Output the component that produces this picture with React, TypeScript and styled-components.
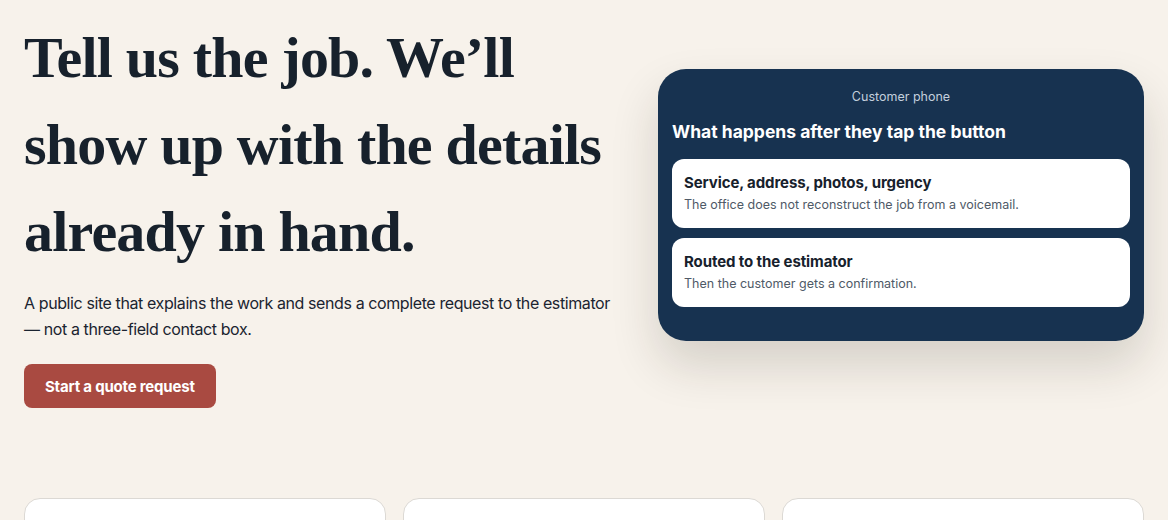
import React from 'react';
import styled, { createGlobalStyle } from 'styled-components';

const GlobalStyle = createGlobalStyle`
  * { box-sizing: border-box; }
  body {
    margin: 0;
    background: #f7f2eb;
    color: #1b2430;
    font-family: Inter, "Noto Sans", sans-serif;
  }
`;

const Page = styled.main`
  padding: 0 24px;
  height: 520px;
  overflow: hidden;
`;

const Hero = styled.section`
  display: grid;
  grid-template-columns: 1fr 486px;
  column-gap: 38px;
  align-items: start;
  padding-top: 14px;
`;

const Intro = styled.div`
  display: flex;
  flex-direction: column;
  align-items: flex-start;
`;

const Headline = styled.h1`
  margin: 0;
  font-family: "Liberation Serif", "DejaVu Serif", serif;
  font-weight: 700;
  font-size: 58px;
  line-height: 87px;
  letter-spacing: -0.8px;
  color: #17212c;
`;

const Lead = styled.p`
  margin: 15px 0 0;
  font-size: 16px;
  line-height: 26px;
  letter-spacing: -0.4px;
  color: #1b2430;
`;

const PrimaryButton = styled.button`
  margin-top: 22px;
  height: 44px;
  padding: 0 21px;
  border: 0;
  border-radius: 8px;
  background: #a94a41;
  color: #fff;
  font-family: inherit;
  font-size: 15px;
  font-weight: 700;
  letter-spacing: -0.2px;
  cursor: pointer;
`;

const Phone = styled.aside`
  margin-top: 55px;
  padding: 20px 14px 34px;
  border-radius: 28px;
  background: #173250;
  box-shadow: 0 24px 48px rgba(40, 30, 20, 0.16);
  display: flex;
  flex-direction: column;
`;

const PhoneLabel = styled.div`
  text-align: center;
  font-size: 12.5px;
  line-height: 16px;
  color: #c3cfdd;
`;

const PhoneTitle = styled.h2`
  margin: 16px 0 16px;
  font-size: 17.5px;
  line-height: 22px;
  font-weight: 700;
  color: #fff;
`;

const StepList = styled.div`
  display: flex;
  flex-direction: column;
  gap: 10px;
`;

const Step = styled.div`
  background: #fff;
  border-radius: 12px;
  padding: 14px 12px;
  height: 69px;
`;

const StepTitle = styled.div`
  font-size: 15px;
  line-height: 20px;
  font-weight: 700;
  letter-spacing: -0.1px;
  color: #17212c;
`;

const StepText = styled.div`
  margin-top: 3px;
  font-size: 12.5px;
  line-height: 18px;
  color: #4f5a67;
`;

const Cards = styled.section`
  margin-top: 90px;
  display: grid;
  grid-template-columns: repeat(3, 1fr);
  gap: 17px;
`;

const Card = styled.div`
  height: 120px;
  background: #fff;
  border: 1px solid #dcd9d4;
  border-radius: 16px;
`;

const steps = [
  {
    title: 'Service, address, photos, urgency',
    text: 'The office does not reconstruct the job from a voicemail.',
  },
  {
    title: 'Routed to the estimator',
    text: 'Then the customer gets a confirmation.',
  },
];

export default function App() {
  return (
    <>
      <GlobalStyle />
      <Page>
        <Hero>
          <Intro>
            <Headline>
              Tell us the job. We’ll
              <br />
              show up with the details
              <br />
              already in hand.
            </Headline>
            <Lead>
              A public site that explains the work and sends a complete request to the estimator
              — not a three-field contact box.
            </Lead>
            <PrimaryButton>Start a quote request</PrimaryButton>
          </Intro>
          <Phone>
            <PhoneLabel>Customer phone</PhoneLabel>
            <PhoneTitle>What happens after they tap the button</PhoneTitle>
            <StepList>
              {steps.map((s) => (
                <Step key={s.title}>
                  <StepTitle>{s.title}</StepTitle>
                  <StepText>{s.text}</StepText>
                </Step>
              ))}
            </StepList>
          </Phone>
        </Hero>
        <Cards>
          <Card />
          <Card />
          <Card />
        </Cards>
      </Page>
    </>
  );
}
